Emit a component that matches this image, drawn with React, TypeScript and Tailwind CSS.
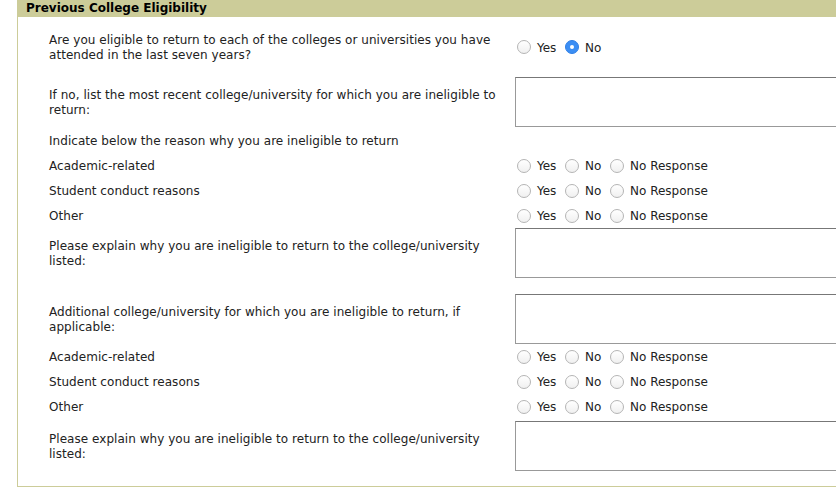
import React from 'react';

type Row =
  | { kind: 'yesno'; label: string[]; h: number }
  | { kind: 'text'; label: string[]; h: number; mt?: number }
  | { kind: 'tri'; label: string; h: number }
  | { kind: 'plain'; label: string; h: number };

const rows: Row[] = [
  { kind: 'yesno', label: ['Are you eligible to return to each of the colleges or universities you have', 'attended in the last seven years?'], h: 60 },
  { kind: 'text', label: ['If no, list the most recent college/university for which you are ineligible to', 'return:'], h: 50 },
  { kind: 'plain', label: 'Indicate below the reason why you are ineligible to return', h: 26 },
  { kind: 'tri', label: 'Academic-related', h: 25 },
  { kind: 'tri', label: 'Student conduct reasons', h: 25 },
  { kind: 'tri', label: 'Other', h: 25 },
  { kind: 'text', label: ['Please explain why you are ineligible to return to the college/university', 'listed:'], h: 50 },
  { kind: 'text', label: ['Additional college/university for which you are ineligible to return, if', 'applicable:'], h: 50, mt: 16 },
  { kind: 'tri', label: 'Academic-related', h: 25 },
  { kind: 'tri', label: 'Student conduct reasons', h: 25 },
  { kind: 'tri', label: 'Other', h: 25 },
  { kind: 'text', label: ['Please explain why you are ineligible to return to the college/university', 'listed:'], h: 50, mt: 2 },
];

const Radio: React.FC<{ checked?: boolean }> = ({ checked }) =>
  checked ? (
    <span className="w-[14px] h-[14px] rounded-full bg-[#3b8ef4] border border-[#2f7fe6] flex items-center justify-center shrink-0">
      <span className="w-[4px] h-[4px] rounded-full bg-white" />
    </span>
  ) : (
    <span className="w-[14px] h-[14px] rounded-full border border-[#b5b5b5] bg-gradient-to-b from-white to-[#f0f0f0] shrink-0" />
  );

// option widths taken from the reference: radio + label + spacing to the next radio
const Option: React.FC<{ label: string; checked?: boolean; w?: string }> = ({ label, checked, w }) => (
  <span className={`flex items-center ${w ?? ''}`}>
    <Radio checked={checked} />
    <span className="ml-[6px] pt-[1px]">{label}</span>
  </span>
);

const Label: React.FC<{ lines: string[] }> = ({ lines }) => (
  <div className="w-[466px] shrink-0 leading-[15px] pt-[2px] tracking-[0.04px]">
    {lines.map((l, i) => (
      <div key={i}>{l}</div>
    ))}
  </div>
);

export default function App() {
  return (
    <div
      className="w-[836px] h-[504px] overflow-hidden bg-white text-[12px] text-[#222]"
      style={{ fontFamily: 'Verdana, "DejaVu Sans", sans-serif' }}
    >
      <div className="ml-[17px] w-[860px] border-l border-b border-[#cccc99] pb-[15px]">
        <div className="h-[17px] w-[818px] bg-[#cccc99] pl-[8px] font-bold text-black leading-[17px]">
          Previous College Eligibility
        </div>
        {rows.map((r, i) => (
          <div
            key={i}
            className="flex items-center pl-[31px]"
            style={{ height: r.h, marginTop: 'mt' in r && r.mt ? r.mt : 0 }}
          >
            {r.kind === 'plain' || r.kind === 'tri' ? (
              <Label lines={[r.label]} />
            ) : (
              <Label lines={r.label} />
            )}
            {r.kind === 'yesno' && (
              <div className="flex items-center ml-[2px]">
                <Option label="Yes" w="w-[48px]" />
                <Option label="No" checked />
              </div>
            )}
            {r.kind === 'tri' && (
              <div className="flex items-center ml-[2px]">
                <Option label="Yes" w="w-[48px]" />
                <Option label="No" w="w-[45px]" />
                <Option label="No Response" />
              </div>
            )}
            {r.kind === 'text' && (
              <div className="w-[340px] h-[50px] border border-[#999] border-t-[#777] bg-white" />
            )}
          </div>
        ))}
      </div>
    </div>
  );
}
